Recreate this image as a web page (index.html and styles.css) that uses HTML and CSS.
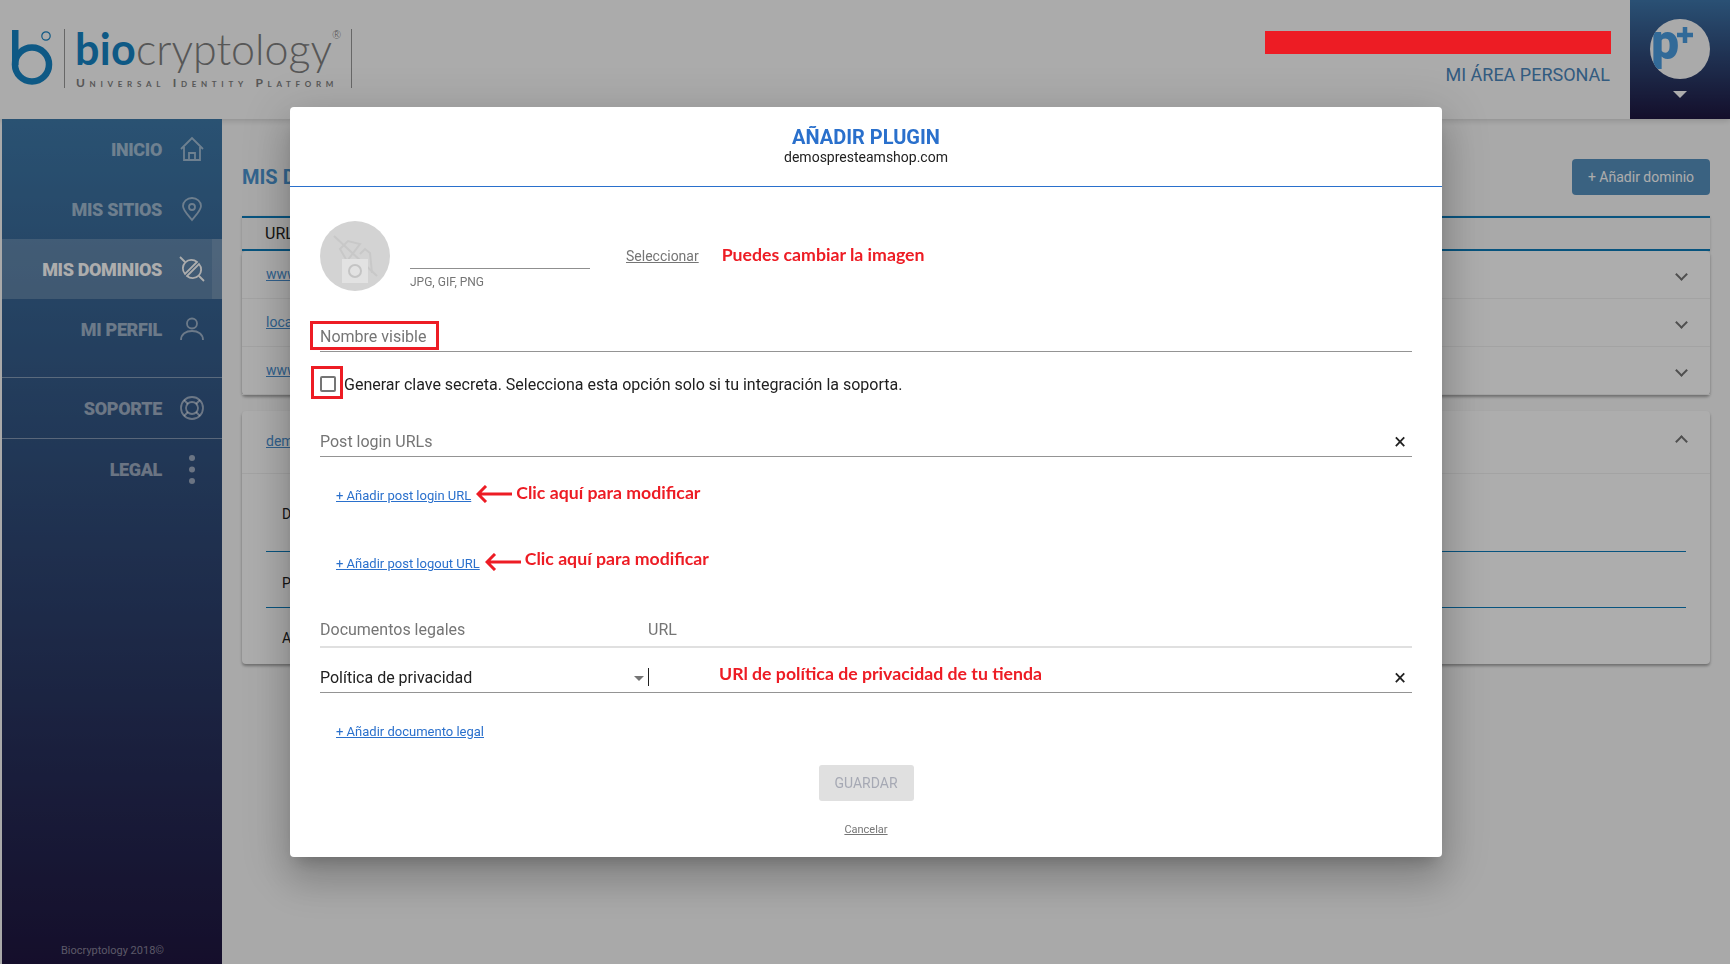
FILE: index.html
```html
<!DOCTYPE html>
<html lang="es">
<head>
    <meta charset="UTF-8">
    <meta name="viewport" content="width=device-width, initial-scale=1.0">
    <title>Biocryptology - Añadir plugin</title>
    <link rel="stylesheet" href="styles.css">
</head>
<body>
    <header class="topbar">
        <div class="logo">
            <svg class="logo-mark" width="56" height="60" viewBox="0 0 56 60">
                <circle cx="32" cy="35.5" r="17" fill="none" stroke="#1684c4" stroke-width="6.5"/>
                <rect x="12" y="1" width="6.5" height="35" fill="#1684c4"/>
                <circle cx="46" cy="7" r="4.2" fill="none" stroke="#1684c4" stroke-width="1.2"/>
            </svg>
            <div class="logo-name">
                <div class="logo-word"><span class="logo-bio">bio</span>cryptology<sup class="logo-reg">®</sup></div>
                <div class="logo-tag">Universal Identity Platform</div>
            </div>
        </div>
        <div class="account">
            <span class="account-label">MI ÁREA PERSONAL</span>
        </div>
        <div class="avatar-box">
            <svg width="60" height="60" viewBox="0 0 60 60">
                <defs>
                    <clipPath id="avatarClip"><circle cx="30" cy="30" r="30"/></clipPath>
                </defs>
                <circle cx="30" cy="30" r="30" fill="#fbfbfb"/>
                <text x="1" y="40" class="avatar-p" clip-path="url(#avatarClip)">p</text>
                <path d="M35 8v16M27 16h16" fill="none" stroke="#4a9ce0" stroke-width="4.5"/>
            </svg>
            <span class="avatar-caret"></span>
        </div>
    </header>

    <div class="page">
        <nav class="sidebar">
            <a class="nav-item">INICIO
                <svg class="nav-icon" viewBox="0 0 24 24"><path d="M1 12 12 1l11 11M4 10v13h16V10M9 23v-7h6v7"/></svg>
            </a>
            <a class="nav-item">MIS SITIOS
                <svg class="nav-icon" viewBox="0 0 24 24"><path d="M12 23C7 17 3 13 3 9a9 8 0 0 1 18 0c0 4-4 8-9 14z"/><circle cx="12" cy="10" r="3"/></svg>
            </a>
            <a class="nav-item active">MIS DOMINIOS
                <svg class="nav-icon" viewBox="0 0 24 24"><path d="M0 0l5 5M19 19l5 5"/><path d="M5 17A8.500 8.500 0 0 1 17 5Z"/><path d="M19 7A8.500 8.500 0 0 1 7 19Z"/></svg>
                <span class="active-edge"></span>
            </a>
            <a class="nav-item">MI PERFIL
                <svg class="nav-icon" viewBox="0 0 24 24"><circle cx="12" cy="6.5" r="5"/><path d="M1 23c0-6 5-9 11-9s11 3 11 9"/></svg>
            </a>
            <div class="nav-divider"></div>
            <a class="nav-item">SOPORTE
                <svg class="nav-icon" viewBox="0 0 24 24"><circle cx="12" cy="12" r="11"/><circle cx="12" cy="12" r="6"/><path d="M4 4l4 4M20 4l-4 4M4 20l4-4M20 20l-4-4"/></svg>
            </a>
            <div class="nav-divider no-gap"></div>
            <a class="nav-item">LEGAL
                <svg class="nav-icon solid" viewBox="0 0 24 24"><circle cx="12" cy="1" r="3"/><circle cx="12" cy="12.500" r="3"/><circle cx="12" cy="24" r="3"/></svg>
            </a>
            <div class="copyright">Biocryptology 2018©</div>
        </nav>

        <main class="content">
            <div class="content-head">
                <h1>MIS DOMINIOS</h1>
                <button class="btn-add">+ Añadir dominio</button>
            </div>

            <div class="table-head">URL</div>
            <section class="card">
                <div class="row"><a>www.biocryptology.com</a><span class="chev"></span></div>
                <div class="row"><a>localhost</a><span class="chev"></span></div>
                <div class="row"><a>www.biocryptology.es</a><span class="chev"></span></div>
            </section>

            <section class="card open">
                <div class="row row-open"><a>demos</a><span class="chev up"></span></div>
                <div class="detail detail-first">D</div>
                <div class="detail detail-mid">P</div>
                <div class="detail detail-last">A</div>
            </section>
        </main>
    </div>

    <div class="overlay"></div>
    <div class="red-bar"></div>

    <!-- Dialog -->
    <div class="dialog">
        <div class="dialog-head">
            <h2>AÑADIR PLUGIN</h2>
            <div class="dialog-sub">demospresteamshop.com</div>
        </div>

        <div class="dialog-body">
            <div class="image-row">
                <div class="plugin-img">
                    <svg width="70" height="70" viewBox="0 0 70 70">
                        <path d="M14 15 57 55" fill="none" stroke="#c8c8c8" stroke-width="2"/>
                        <path d="M20 28 28 20 40 23 27 40Z" fill="none" stroke="#c8c8c8" stroke-width="2"/>
                        <path d="M40 33 45 28 50 32 52 52" fill="none" stroke="#c8c8c8" stroke-width="2"/>
                        <rect x="22" y="38" width="26" height="24" fill="#e2e2e2"/>
                        <circle cx="35" cy="50" r="6" fill="#e2e2e2" stroke="#c4c4c4" stroke-width="2"/>
                    </svg>
                </div>
                <div class="file-col">
                    <div class="file-line"></div>
                    <div class="file-hint">JPG, GIF, PNG</div>
                </div>
                <a class="select-link">Seleccionar</a>
                <span class="note note-image">Puedes cambiar la imagen</span>
            </div>

            <div class="field field-name"><span>Nombre visible</span><span class="mark mark-name"></span></div>

            <div class="check-row">
                <span class="checkbox"></span>
                <span>Generar clave secreta. Selecciona esta opción solo si tu integración la soporta.</span>
                <span class="mark mark-check"></span>
            </div>

            <div class="field field-urls"><span>Post login URLs</span><span class="clear">×</span></div>

            <div class="link-row first">
                <a class="add-link">+ Añadir post login URL</a>
                <svg class="arrow" width="36" height="18" viewBox="0 0 36 18"><path d="M36 9H3M10 1 2 9l8 8" fill="none" stroke="#ed1c24" stroke-width="3"/></svg>
                <span class="note">Clic aquí para modificar</span>
            </div>
            <div class="link-row second">
                <a class="add-link">+ Añadir post logout URL</a>
                <svg class="arrow" width="36" height="18" viewBox="0 0 36 18"><path d="M36 9H3M10 1 2 9l8 8" fill="none" stroke="#ed1c24" stroke-width="3"/></svg>
                <span class="note">Clic aquí para modificar</span>
            </div>

            <div class="legal-head">
                <span class="legal-col">Documentos legales</span>
                <span>URL</span>
            </div>
            <div class="legal-row">
                <span class="legal-col legal-select">Política de privacidad<span class="select-caret"></span></span>
                <span class="text-cursor"></span>
                <span class="note note-legal">URl de política de privacidad de tu tienda</span>
                <span class="clear">×</span>
            </div>

            <div class="link-row third">
                <a class="add-link">+ Añadir documento legal</a>
            </div>

            <button class="btn-save" disabled>GUARDAR</button>
            <a class="cancel-link">Cancelar</a>
        </div>
    </div>
</body>
</html>
```

FILE: styles.css
```css
* {
    box-sizing: border-box;
}

body {
    margin: 0;
    width: 1730px;
    height: 964px;
    overflow: hidden;
    font-family: Roboto, sans-serif;
    background-color: #fafafa;
    color: #212121;
}

a {
    cursor: pointer;
}

/* top bar */
.topbar {
    display: flex;
    height: 119px;
    background-color: #fcfcfc;
    box-shadow: 0 2px 6px rgba(0, 0, 0, 0.15);
    position: relative;
}

.logo {
    display: flex;
    padding-top: 29px;
}

.logo-mark {
    flex: none;
    margin-right: 8px;
}

.logo-name {
    height: 59px;
    width: 288px;
    padding-left: 10px;
    border-left: 1px solid #999;
    border-right: 1px solid #999;
}

.logo-word {
    font-family: Lato, sans-serif;
    font-weight: 300;
    font-size: 43px;
    line-height: 40px;
    letter-spacing: 0;
    color: #808080;
    white-space: nowrap;
}

.logo-bio {
    font-weight: 700;
    color: #1684c4;
    letter-spacing: 0.3px;
}

.logo-reg {
    font-size: 11px;
    line-height: 0;
    vertical-align: 26px;
    letter-spacing: 0;
    color: #6e6e6e;
}

.logo-tag {
    margin-top: 8px;
    padding-left: 1px;
    font-family: Lato, sans-serif;
    font-variant: small-caps;
    font-weight: 700;
    font-size: 12px;
    line-height: 12px;
    letter-spacing: 4.7px;
    color: #808080;
    white-space: nowrap;
}

.account {
    flex: 1;
    display: flex;
    justify-content: flex-end;
    padding: 64px 20px 0 0;
}

.account-label {
    font-size: 18px;
    line-height: 22px;
    color: #4a86bc;
}

.avatar-box {
    width: 100px;
    padding-top: 19px;
    display: flex;
    flex-direction: column;
    align-items: center;
    background: linear-gradient(#3e77ac, #1e1640);
}

.avatar-box svg {
    overflow: visible;
}

.avatar-p {
    font-family: Roboto, sans-serif;
    font-weight: 900;
    font-size: 50px;
    fill: #4a9ce0;
}

.avatar-caret {
    margin-top: 12px;
    border-left: 7.5px solid transparent;
    border-right: 7.5px solid transparent;
    border-top: 7px solid #ffffff;
}

/* page under the dialog */
.page {
    display: flex;
    height: 845px;
}

.sidebar {
    width: 220px;
    margin-left: 2px;
    display: flex;
    flex-direction: column;
    position: relative;
    background: linear-gradient(#3e79a9, #1f1640);
}

.nav-item {
    height: 60px;
    flex: none;
    display: flex;
    align-items: center;
    justify-content: flex-end;
    padding-right: 18px;
    position: relative;
    font-weight: 900;
    font-size: 18px;
    letter-spacing: -0.35px;
    color: rgba(255, 255, 255, 0.53);
}

.nav-item.active {
    color: #ffffff;
    background-color: rgba(255, 255, 255, 0.2);
}

.active-edge {
    position: absolute;
    top: 0;
    right: 0;
    width: 10px;
    height: 100%;
    background-color: rgba(255, 255, 255, 0.12);
}

.nav-icon {
    width: 24px;
    height: 24px;
    margin-left: 18px;
    overflow: visible;
    fill: none;
    stroke: currentColor;
    stroke-width: 1.8;
}

.nav-icon.solid {
    fill: currentColor;
    stroke: none;
}

.nav-divider {
    height: 1px;
    flex: none;
    margin-top: 18px;
    background-color: rgba(255, 255, 255, 0.4);
}

.nav-divider.no-gap {
    margin-top: 0;
}

.copyright {
    margin-top: auto;
    padding: 0 0 7px 59px;
    font-size: 11px;
    line-height: 13px;
    color: rgba(255, 255, 255, 0.47);
}

.content {
    flex: 1;
    padding: 40px 20px 0 20px;
}

.content-head {
    display: flex;
    justify-content: space-between;
    align-items: center;
    height: 36px;
    margin-bottom: 21px;
}

.content-head h1 {
    margin: 0;
    font-size: 20px;
    color: #4c95d2;
}

.btn-add {
    width: 138px;
    height: 36px;
    border: none;
    border-radius: 4px;
    background-color: #4e8cbc;
    color: #ffffff;
    font-family: Roboto, sans-serif;
    font-size: 14px;
    opacity: 0.95;
}

.table-head {
    height: 35px;
    padding-left: 23px;
    line-height: 31px;
    font-size: 16px;
    border-top: 2px solid #0c7dbb;
    border-bottom: 2px solid #0c7dbb;
    box-shadow: 0 1px 3px rgba(0, 0, 0, 0.2);
}

.card {
    border-radius: 4px;
    background-color: #ffffff;
    box-shadow: 0 2px 3px rgba(0, 0, 0, 0.35);
}

.card.open {
    margin-top: 16px;
    height: 253px;
}

.card .row {
    display: flex;
    justify-content: space-between;
    align-items: center;
    height: 48px;
    padding: 0 24px 1px;
    border-bottom: 1px solid #f0f0f0;
    font-size: 14px;
}

.card .row-open {
    height: 63px;
    padding-bottom: 2px;
}

.row a {
    color: #4a90d0;
    text-decoration: underline;
}

.chev {
    width: 9px;
    height: 9px;
    margin-top: 0;
    border-right: 2px solid #757575;
    border-bottom: 2px solid #757575;
    transform: rotate(45deg);
}

.chev.up {
    margin-top: 1px;
    transform: rotate(225deg);
}

.detail {
    margin: 0 24px;
    padding-left: 16px;
    font-size: 14px;
    border-bottom: 1px solid #0c7dbb;
}

.detail-first {
    height: 78px;
    padding-top: 32px;
}

.detail-mid {
    height: 56px;
    padding-top: 23px;
}

.detail-last {
    height: 56px;
    padding-top: 22px;
    border-bottom: none;
}

/* dialog and what sits over the page */
.overlay {
    position: fixed;
    inset: 0;
    background-color: rgba(0, 0, 0, 0.32);
}

.red-bar {
    position: absolute;
    left: 1265px;
    top: 31px;
    width: 346px;
    height: 23px;
    background-color: #ed1c24;
}

.dialog {
    position: absolute;
    left: 290px;
    top: 107px;
    width: 1152px;
    height: 750px;
    border-radius: 4px;
    background-color: #ffffff;
    box-shadow: 0 11px 15px -7px rgba(0, 0, 0, 0.2), 0 24px 38px 3px rgba(0, 0, 0, 0.14), 0 9px 46px 8px rgba(0, 0, 0, 0.12);
}

.dialog-head {
    height: 80px;
    padding-top: 18px;
    text-align: center;
    border-bottom: 1px solid #2a70cc;
}

.dialog-head h2 {
    margin: 0;
    font-size: 20px;
    line-height: 24px;
    font-weight: 700;
    color: #2a70cc;
}

.dialog-sub {
    font-size: 14px;
    line-height: 17px;
    color: #212121;
}

.dialog-body {
    padding: 0 30px;
    display: flex;
    flex-direction: column;
    font-size: 16px;
}

.image-row {
    display: flex;
    align-items: flex-start;
    height: 70px;
    margin-top: 34px;
}

.plugin-img {
    width: 70px;
    height: 70px;
    border-radius: 50%;
    background-color: #d3d3d3;
}

.file-col {
    width: 180px;
    margin-left: 20px;
}

.file-line {
    height: 48px;
    border-bottom: 1px solid #8f8f8f;
}

.file-hint {
    margin-top: 6px;
    font-size: 12px;
    line-height: 14px;
    color: #757575;
}

.select-link {
    margin: 25px 0 0 36px;
    font-size: 14px;
    line-height: 20px;
    color: #757575;
    text-decoration: underline;
}

.note {
    font-family: Lato, sans-serif;
    font-weight: 700;
    font-size: 17.7px;
    line-height: 20px;
    color: #ed1c24;
    white-space: nowrap;
}

.note-image {
    margin: 24px 0 0 23px;
}

.field {
    position: relative;
    height: 31px;
    line-height: 32px;
    color: #757575;
    border-bottom: 1px solid #949494;
}

.field-name {
    margin-top: 30px;
}

.field-urls {
    height: 30px;
    line-height: 30px;
    margin-top: 31px;
}

.mark {
    position: absolute;
    border: 3px solid #ed1c24;
}

.mark-name {
    left: -10px;
    top: 0;
    width: 129px;
    height: 29px;
}

.mark-check {
    left: -9px;
    top: -6px;
    width: 32px;
    height: 33px;
}

.check-row {
    position: relative;
    display: flex;
    align-items: center;
    gap: 8px;
    height: 24px;
    margin-top: 20px;
}

.checkbox {
    width: 16px;
    height: 16px;
    border: 2px solid #757575;
    border-radius: 2px;
}

.clear {
    position: absolute;
    right: 6px;
    top: 0;
    font-size: 22px;
    color: #212121;
}

.link-row {
    display: flex;
    align-items: center;
    height: 20px;
    padding-left: 16px;
}

.link-row.first {
    margin-top: 28px;
}

.link-row.second {
    margin-top: 48px;
}

.link-row.third {
    margin-top: 28px;
}

.add-link {
    font-size: 13px;
    color: #2a70cc;
    text-decoration: underline;
}

.arrow {
    margin: -3px 4px 0 5px;
}

.first .note {
    margin-top: -5px;
}

.second .note {
    margin-top: -8px;
}

.legal-head {
    display: flex;
    height: 34px;
    margin-top: 41px;
    padding-top: 6px;
    color: #757575;
    border-bottom: 2px solid #e0e0e0;
}

.legal-col {
    width: 328px;
}

.legal-row {
    position: relative;
    display: flex;
    align-items: center;
    height: 45px;
    padding-top: 14px;
    border-bottom: 1px solid #949494;
}

.legal-select {
    position: relative;
    color: #212121;
}

.select-caret {
    position: absolute;
    right: 4px;
    top: 8px;
    border-left: 5px solid transparent;
    border-right: 5px solid transparent;
    border-top: 5px solid #757575;
}

.text-cursor {
    width: 1px;
    height: 18px;
    background-color: #212121;
}

.note-legal {
    margin: -6px 0 0 70px;
}

.legal-row .clear {
    top: 17px;
}

.btn-save {
    align-self: center;
    width: 95px;
    height: 36px;
    margin-top: 24px;
    border: none;
    border-radius: 3px;
    background-color: #e0e0e0;
    color: #a6a9b4;
    font-family: Roboto, sans-serif;
    font-size: 14px;
}

.cancel-link {
    align-self: center;
    margin-top: 21px;
    font-size: 11px;
    line-height: 16px;
    color: #757575;
    text-decoration: underline;
}
```
